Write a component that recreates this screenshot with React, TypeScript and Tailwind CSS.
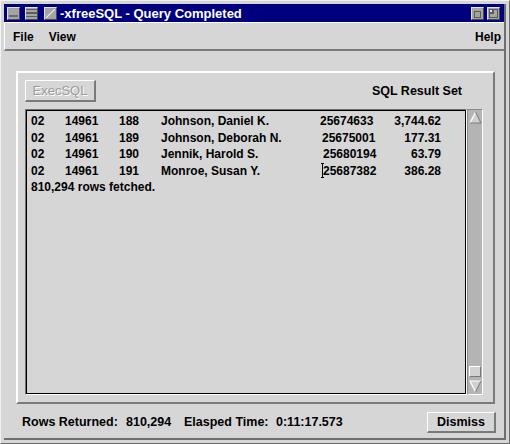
import React from 'react';

type Row = { a: string; b: string; c: string; name: string; num: string; amt: string; pad: string; cursor?: boolean };

const rows: Row[] = [
  { a: '02', b: '14961', c: '188', name: 'Johnson, Daniel K.', num: '25674633', amt: '3,744.62', pad: 'pl-0' },
  { a: '02', b: '14961', c: '189', name: 'Johnson, Deborah N.', num: '25675001', amt: '177.31', pad: 'pl-[2px]' },
  { a: '02', b: '14961', c: '190', name: 'Jennik, Harold S.', num: '25680194', amt: '63.79', pad: 'pl-[3px]' },
  { a: '02', b: '14961', c: '191', name: 'Monroe, Susan Y.', num: '25687382', amt: '386.28', pad: 'pl-[3px]', cursor: true },
];

const TitleBtn: React.FC<{ kind: 'min' | 'menu' | 'diag' | 'icon' | 'max' }> = ({ kind }) => (
  <span className="flex h-[13px] w-[13px] items-center justify-center border border-t-[#e2e2e2] border-l-[#e2e2e2] border-r-[#4a4a4a] border-b-[#4a4a4a] bg-[#a4a4a4]">
    <svg width="11" height="11" viewBox="0 0 10 10" shapeRendering="crispEdges">
      {kind === 'min' && <rect x="1" y="6" width="8" height="2" fill="#6a6a6a" />}
      {kind === 'menu' && (
        <g fill="#5e5e5e">
          <rect x="0" y="1" width="10" height="1" />
          <rect x="0" y="4" width="10" height="1" />
          <rect x="0" y="7" width="10" height="1" />
        </g>
      )}
      {kind === 'diag' && <path d="M1 9 L9 1" stroke="#e6e6e6" strokeWidth="1.2" shapeRendering="auto" />}
      {kind === 'icon' && <rect x="2.5" y="3.5" width="5" height="5" fill="none" stroke="#5a5a5a" />}
      {kind === 'max' && (
        <g fill="none" stroke="#5a5a5a">
          <rect x="1.5" y="1.5" width="7" height="7" />
          <rect x="1.5" y="1.5" width="3" height="3" fill="#e0e0e0" />
        </g>
      )}
    </svg>
  </span>
);

const Arrow: React.FC<{ up?: boolean }> = ({ up }) => (
  <div className="flex h-[15px] items-center justify-center">
    <svg width="13" height="13" viewBox="0 0 13 13">
      {up ? (
        <>
          <polygon points="6.5,1 12,12 1,12" fill="#cfcfcf" />
          <path d="M1 12 L6.5 1" stroke="#ffffff" strokeWidth="1.2" fill="none" />
          <path d="M6.5 1 L12 12 L1 12" stroke="#7a7a7a" strokeWidth="1" fill="none" />
        </>
      ) : (
        <>
          <polygon points="1,1 12,1 6.5,12" fill="#cfcfcf" />
          <path d="M6.5 12 L1 1 L12 1" stroke="#ffffff" strokeWidth="1.2" fill="none" />
          <path d="M12 1 L6.5 12" stroke="#7a7a7a" strokeWidth="1" fill="none" />
        </>
      )}
    </svg>
  </div>
);

export default function App() {
  return (
    <div className="h-[444px] w-[510px] overflow-hidden border border-t-[#f2f2f2] border-l-[#f2f2f2] border-r-[#6b6b6b] border-b-[#6b6b6b] bg-[#d6d6d6] p-[3px] font-['Liberation_Sans',Arial,sans-serif] text-black">
      <div className="flex h-full flex-col border-r-2 border-b-2 border-[#6e6e6e]">
        {/* title bar */}
        <div className="flex h-[18px] shrink-0 items-center bg-[#00007f] pl-[3px] pr-[4px]">
          <TitleBtn kind="min" />
          <span className="ml-[5px]"><TitleBtn kind="menu" /></span>
          <span className="ml-[6px]"><TitleBtn kind="diag" /></span>
          <span className="ml-[3px] text-[13px] font-bold leading-none text-white">-xfreeSQL - Query Completed</span>
          <span className="ml-auto"><TitleBtn kind="icon" /></span>
          <span className="ml-[3px]"><TitleBtn kind="max" /></span>
        </div>

        {/* menu bar */}
        <div className="flex h-[29px] shrink-0 items-center justify-between border-t border-l border-b-2 border-t-white border-l-white border-b-[#7a7a7a] pl-[8px] pr-[3px] pt-[1px] text-[12px] font-bold">
          <div className="flex gap-[15px]">
            <span>File</span>
            <span>View</span>
          </div>
          <span>Help</span>
        </div>

        {/* main form */}
        <div className="flex flex-1 flex-col">
          <div className="ml-[12px] mr-[9px] mt-[20px] flex h-[333px] flex-col border-2 border-t-white border-l-white border-r-[#7a7a7a] border-b-[#7a7a7a]">
            <div className="ml-[7px] mr-[31px] mt-[7px] flex h-[22px] items-center justify-between">
              <button className="flex h-[22px] w-[71px] items-center justify-center border-t border-l border-r-2 border-b-2 border-t-white border-l-white border-r-[#7a7a7a] border-b-[#7a7a7a] text-[13px] text-[#9c9c9c] [text-shadow:1px_1px_0_#ffffff]">
                ExecSQL
              </button>
              <span className="text-[12.5px] font-bold">SQL Result Set</span>
            </div>

            <div className="ml-[7px] mt-[7px] flex h-[286px] w-[458px]">
              <div className="h-full w-[442px] border border-t-[#6e6e6e] border-l-[#6e6e6e] border-r-white border-b-white">
                <div className="h-full border border-black pl-[4px] pt-[2px] text-[12px] font-bold leading-[16.5px]">
                  {rows.map((r) => (
                    <div key={r.c} className="flex whitespace-nowrap">
                      <span className="w-[34px]">{r.a}</span>
                      <span className="w-[54px]">{r.b}</span>
                      <span className="w-[42px]">{r.c}</span>
                      <span className="w-[159px]">{r.name}</span>
                      <span className={`relative w-[58px] ${r.pad}`}>
                        {r.cursor && (
                          <span className="absolute left-[1px] top-0 flex h-[15px] w-[3px] flex-col items-center">
                            <span className="h-px w-[3px] bg-black" />
                            <span className="w-px flex-1 bg-black" />
                            <span className="h-px w-[3px] bg-black" />
                          </span>
                        )}
                        {r.num}
                      </span>
                      <span className="w-[63px] text-right">{r.amt}</span>
                    </div>
                  ))}
                  <div>810,294 rows fetched.</div>
                </div>
              </div>
              <div className="flex h-full w-[16px] flex-col border border-t-[#8a8a8a] border-l-[#8a8a8a] border-r-white border-b-white bg-[#b4b4b4]">
                <Arrow up />
                <div className="flex flex-1 flex-col justify-end px-[1px] pb-[2px]">
                  <div className="h-[11px] border border-t-white border-l-white border-r-[#7a7a7a] border-b-[#7a7a7a] bg-[#d2d2d2]" />
                </div>
                <Arrow />
              </div>
            </div>
          </div>

          {/* status line */}
          <div className="flex items-start pt-[8px]">
            <div className="ml-[18px] flex h-[21px] items-center whitespace-nowrap text-[12.5px] font-bold">
              <span className="w-[104px]">Rows Returned:</span>
              <span className="w-[58px]">810,294</span>
              <span className="w-[92px]">Elasped Time:</span>
              <span>0:11:17.573</span>
            </div>
            <button className="ml-auto mr-[8px] flex h-[21px] w-[69px] items-center justify-center border-t border-l border-r-2 border-b-2 border-t-white border-l-white border-r-[#7a7a7a] border-b-[#7a7a7a] text-[12.5px] font-bold">
              Dismiss
            </button>
          </div>
        </div>
      </div>
    </div>
  );
}
